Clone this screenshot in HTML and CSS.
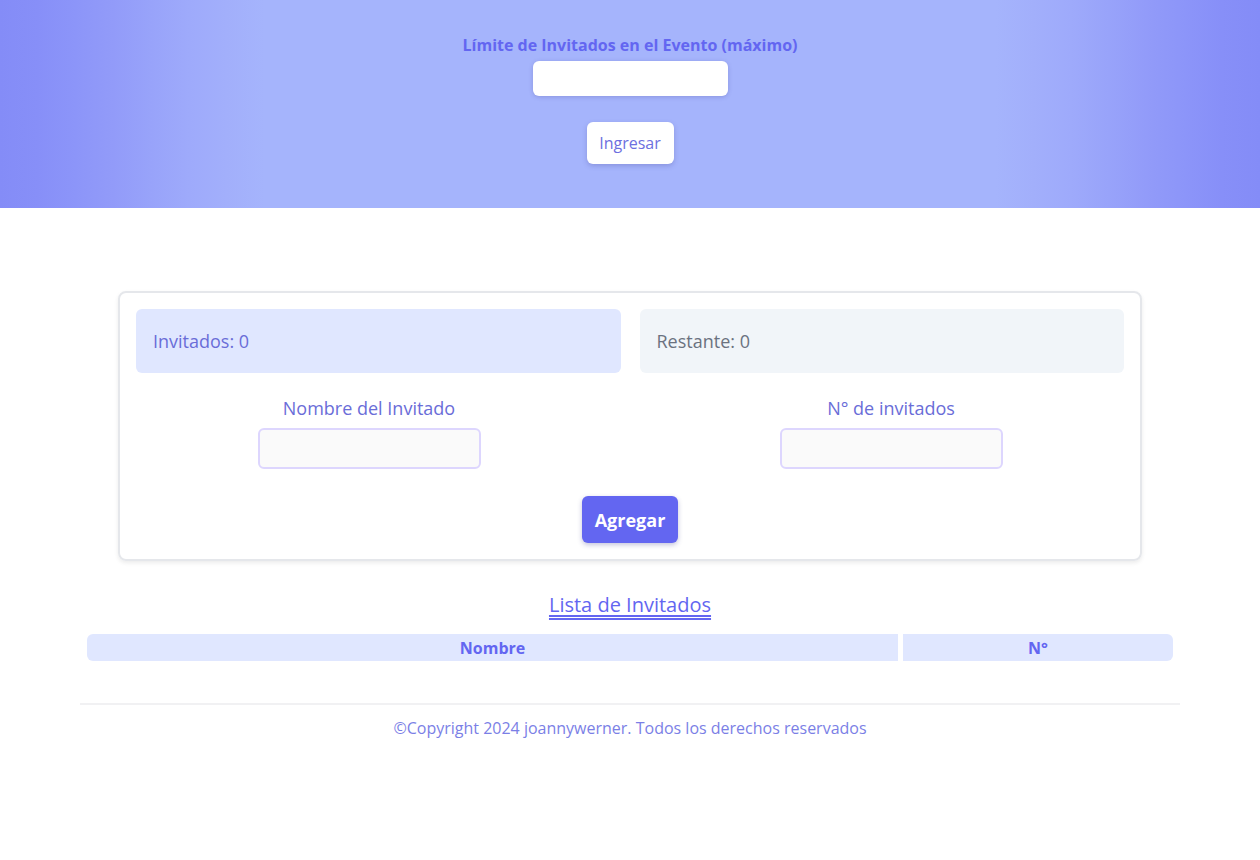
FILE: index.html
```html
<!DOCTYPE html>
<html lang="es">
<head>
<meta charset="utf-8">
<title>Invitados</title>
<link rel="stylesheet" href="styles.css">
</head>
<body>
<header class="hero">
  <label class="hero-label" for="limite">Límite de Invitados en el Evento (máximo)</label>
  <input class="hero-input" id="limite" type="text">
  <button class="hero-btn">Ingresar</button>
</header>
<main class="main">
  <section class="card">
    <div class="stats">
      <div class="stat stat-guests">Invitados: 0</div>
      <div class="stat stat-left">Restante: 0</div>
    </div>
    <div class="fields">
      <div class="field">
        <label class="field-label">Nombre del Invitado</label>
        <input class="field-input" type="text">
      </div>
      <div class="field">
        <label class="field-label">N° de invitados</label>
        <input class="field-input" type="text">
      </div>
    </div>
    <div class="actions"><button class="add-btn">Agregar</button></div>
  </section>
  <h2 class="list-title">Lista de Invitados</h2>
  <div class="table">
    <div class="th th-first">Nombre</div>
    <div class="th th-last">N°</div>
  </div>
</main>
<footer class="footer">
  <p class="copy">©Copyright 2024 joannywerner. Todos los derechos reservados</p>
</footer>
</body>
</html>
```
FILE: styles.css
```css
* { box-sizing: border-box; }
body {
  margin: 0;
  font-family: "Open Sans", Lato, sans-serif;
  color: #6366f1;
  background: #fff;
}
.hero {
  height: 208px;
  background: linear-gradient(to right,
    #848cf7 0%, #878ff8 3%, #8c95f9 6%, #929bf9 9%, #98a3fa 12%, #9eaafb 15%, #a2affb 18%, #a5b4fc 21%,
    #a5b4fc 79%, #a2affb 82%, #9eaafb 85%, #98a3fa 88%, #929bf9 91%, #8c95f9 94%, #878ff8 97%, #848cf7 100%);
  display: flex;
  flex-direction: column;
  align-items: center;
  padding-top: 35px;
}
.hero-label {
  font-weight: 700;
  font-size: 16px;
  line-height: 20px;
  color: #6366f1;
}
.hero-input {
  margin-top: 6px;
  width: 195px;
  height: 35px;
  border: none;
  border-radius: 6px;
  background: #fff;
  box-shadow: 0 1px 4px rgba(60, 60, 140, 0.25);
}
.hero-btn {
  margin-top: 26px;
  width: 87px;
  height: 42px;
  border: none;
  border-radius: 6px;
  background: #fff;
  color: #6d6fe0;
  font-family: inherit;
  font-size: 16px;
  box-shadow: 0 2px 5px rgba(60, 60, 140, 0.25);
}
.main {
  width: 1100px;
  margin: 0 auto;
  padding-top: 83px;
  display: flex;
  flex-direction: column;
  align-items: center;
}
.card {
  width: 1024px;
  border: 2px solid #e5e7eb;
  border-radius: 8px;
  box-shadow: 0 2px 4px rgba(0, 0, 0, 0.08);
  padding: 16px 16px 16px;
}
.stats {
  display: grid;
  grid-template-columns: 1fr 1fr;
  gap: 19px;
}
.stat {
  height: 64px;
  border-radius: 6px;
  display: flex;
  align-items: center;
  padding-left: 17px;
  font-size: 18px;
}
.stat-guests { background: #e0e7ff; color: #6a6dd8; }
.stat-left { background: #f1f5f9; color: #6b7280; }
.fields {
  display: grid;
  grid-template-columns: 1fr 1fr;
  gap: 56px;
  margin-top: 24px;
}
.field {
  display: flex;
  flex-direction: column;
  align-items: center;
}
.field-label {
  font-size: 18px;
  line-height: 22px;
  color: #6a6dd8;
}
.field-input {
  margin-top: 9px;
  width: 223px;
  height: 41px;
  border: 2px solid #ddd6fe;
  border-radius: 6px;
  background: #fafafa;
}
.actions {
  display: flex;
  justify-content: center;
  margin-top: 27px;
}
.add-btn {
  width: 96px;
  height: 47px;
  border: none;
  border-radius: 6px;
  background: #6366f1;
  color: #fff;
  font-family: inherit;
  font-weight: 700;
  font-size: 18px;
  box-shadow: 0 2px 5px rgba(60, 60, 140, 0.3);
}
.list-title {
  margin: 30px 0 0;
  font-size: 20px;
  line-height: 28px;
  font-weight: 400;
  color: #6366f1;
  text-decoration: underline double;
  text-underline-offset: 3px;
}
.table {
  width: 1086px;
  margin-top: 15px;
  display: grid;
  grid-template-columns: 811px 1fr;
  gap: 5px;
}
.th {
  height: 27px;
  background: #e0e7ff;
  display: flex;
  align-items: center;
  justify-content: center;
  font-weight: 700;
  font-size: 16px;
  color: #6366f1;
}
.th-first { border-radius: 6px 0 0 6px; }
.th-last { border-radius: 0 6px 6px 0; }
.footer {
  width: 1100px;
  margin: 42px auto 0;
  border-top: 2px solid #f1f1f3;
  text-align: center;
}
.copy {
  margin: 12px 0 0;
  font-size: 16px;
  line-height: 22px;
  color: #7b7fe6;
}
```
